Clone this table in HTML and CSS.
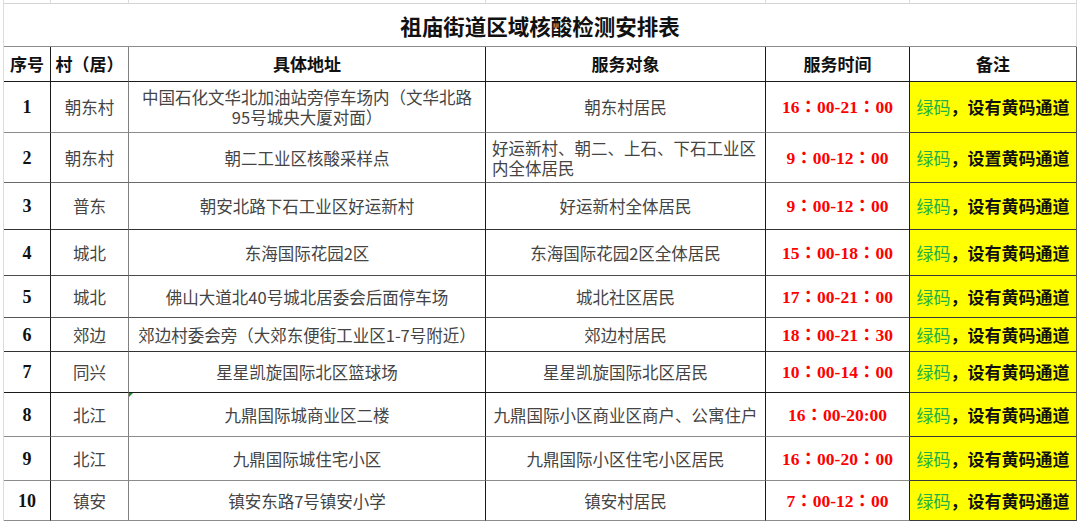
FILE: index.html
```html
<!DOCTYPE html>
<html lang="zh-CN">
<head>
<meta charset="utf-8">
<title>祖庙街道区域核酸检测安排表</title>
<link rel="stylesheet" href="styles.css">
</head>
<body>
<div class="sheet">
  <div class="row strip">
    <div class="c"></div><div class="c"></div><div class="c"></div><div class="c"></div><div class="c"></div><div class="c"></div>
  </div>
  <div class="row">
    <div class="c title">祖庙街道区域核酸检测安排表</div>
  </div>
  <div class="row head">
    <div class="c">序号</div><div class="c">村（居）</div><div class="c">具体地址</div><div class="c">服务对象</div><div class="c">服务时间</div><div class="c">备注</div>
  </div>
  <div class="row r1">
    <div class="c no">1</div><div class="c">朝东村</div><div class="c multi"><span class="ln">中国石化文华北加油站旁停车场内（文华北路</span><span class="ln">95号城央大厦对面）</span></div><div class="c">朝东村居民</div><div class="c time">16：00-21：00</div><div class="c note"><span class="g">绿码</span>，设有黄码通道</div>
  </div>
  <div class="row r2">
    <div class="c no">2</div><div class="c">朝东村</div><div class="c">朝二工业区核酸采样点</div><div class="c multi left"><span class="ln">好运新村、朝二、上石、下石工业区</span><span class="ln">内全体居民</span></div><div class="c time">9：00-12：00</div><div class="c note"><span class="g">绿码</span>，设置黄码通道</div>
  </div>
  <div class="row r3">
    <div class="c no">3</div><div class="c">普东</div><div class="c">朝安北路下石工业区好运新村</div><div class="c">好运新村全体居民</div><div class="c time">9：00-12：00</div><div class="c note"><span class="g">绿码</span>，设有黄码通道</div>
  </div>
  <div class="row r4">
    <div class="c no">4</div><div class="c">城北</div><div class="c">东海国际花园2区</div><div class="c">东海国际花园2区全体居民</div><div class="c time">15：00-18：00</div><div class="c note"><span class="g">绿码</span>，设有黄码通道</div>
  </div>
  <div class="row r5">
    <div class="c no">5</div><div class="c">城北</div><div class="c">佛山大道北40号城北居委会后面停车场</div><div class="c">城北社区居民</div><div class="c time">17：00-21：00</div><div class="c note"><span class="g">绿码</span>，设有黄码通道</div>
  </div>
  <div class="row r6">
    <div class="c no">6</div><div class="c">郊边</div><div class="c">郊边村委会旁（大郊东便街工业区1-7号附近）</div><div class="c">郊边村居民</div><div class="c time">18：00-21：30</div><div class="c note"><span class="g">绿码</span>，设有黄码通道</div>
  </div>
  <div class="row r7">
    <div class="c no">7</div><div class="c">同兴</div><div class="c">星星凯旋国际北区篮球场</div><div class="c">星星凯旋国际北区居民</div><div class="c time">10：00-14：00</div><div class="c note"><span class="g">绿码</span>，设有黄码通道</div>
  </div>
  <div class="row r8">
    <div class="c no">8</div><div class="c">北江</div><div class="c flag">九鼎国际城商业区二楼</div><div class="c">九鼎国际小区商业区商户、公寓住户</div><div class="c time">16：00-20:00</div><div class="c note"><span class="g">绿码</span>，设有黄码通道</div>
  </div>
  <div class="row r9">
    <div class="c no">9</div><div class="c">北江</div><div class="c">九鼎国际城住宅小区</div><div class="c">九鼎国际小区住宅小区居民</div><div class="c time">16：00-20：00</div><div class="c note"><span class="g">绿码</span>，设有黄码通道</div>
  </div>
  <div class="row r10">
    <div class="c no">10</div><div class="c">镇安</div><div class="c">镇安东路7号镇安小学</div><div class="c">镇安村居民</div><div class="c time">7：00-12：00</div><div class="c note"><span class="g">绿码</span>，设有黄码通道</div>
  </div>
</div>
</body>
</html>
```

FILE: styles.css
```css
html, body {
  margin: 0;
  padding: 0;
  background: #ffffff;
}

body {
  width: 1080px;
  height: 524px;
  overflow: hidden;
  font-family: "Noto Sans CJK SC", "Noto Sans", sans-serif;
}

.sheet {
  display: grid;
  grid-template-columns: 47px 78px 357px 280px 144px 167px;
  grid-template-rows: 4px 43px 35px 51px 50px 47px 46px 42px 34px 41px 44px 44px 40px;
  margin-left: 3px;
  width: 1073px;
  border-left: 1px solid #dcdcdc;
}

.row {
  display: contents;
}

.c {
  box-sizing: border-box;
  border-right: 1px solid #1a1a1a;
  border-bottom: 1px solid #8c8c8c;
  display: flex;
  align-items: center;
  justify-content: center;
  text-align: center;
  font-size: 16.5px;
  line-height: 20px;
  color: #444444;
  white-space: nowrap;
  position: relative;
}

.multi {
  flex-direction: column;
}

.ln {
  display: block;
  height: 20px;
  line-height: 20px;
}

/* column line colours */
.row > .c:nth-child(2) { border-right-color: #808080; }
.row > .c:nth-child(6) { border-right-color: #555555; }

/* top strip of spreadsheet grid */
.strip > .c,
.strip > .c:nth-child(2),
.strip > .c:nth-child(6) {
  border-right-color: #dcdcdc;
  border-bottom-color: #d4d4d4;
}

.title {
  grid-column: 1 / -1;
  border-right-color: #dcdcdc;
  border-bottom-color: #8c8c8c;
  font-size: 21.5px;
  font-weight: 700;
  color: #111111;
  padding-top: 1px;
}

.head > .c {
  font-size: 17px;
  font-weight: 700;
  color: #111111;
  border-bottom-color: #1a1a1a;
}

.r1 > .c { border-bottom-color: #8c8c8c; }
.r2 > .c { border-bottom-color: #6a6a6a; }
.r3 > .c { border-bottom-color: #333333; }
.r4 > .c { border-bottom-color: #4a4a4a; }
.r5 > .c { border-bottom-color: #555555; }
.r6 > .c { border-bottom-color: #333333; }
.r7 > .c { border-bottom-color: #1a1a1a; }
.r8 > .c { border-bottom-color: #8c8c8c; }
.r9 > .c { border-bottom-color: #8c8c8c; }
.r10 > .c { border-bottom-color: #8c8c8c; }

.no {
  font-family: "Liberation Serif", "Noto Sans CJK SC", serif;
  font-weight: 700;
  font-size: 18px;
  color: #111111;
}

.left {
  align-items: flex-start;
  text-align: left;
  padding-left: 6px;
}

.time {
  font-family: "Liberation Serif", "Noto Sans CJK TC", serif;
  font-weight: 700;
  font-size: 17.5px;
  color: #ff0000;
}

.note {
  background: #ffff00;
  font-size: 17px;
  font-weight: 700;
  color: #111111;
}

.row > .note { border-bottom-color: #3a3a3a; }

.g {
  color: #1db04a;
  font-weight: 400;
}

.flag::before {
  content: "";
  position: absolute;
  left: 0;
  top: 0;
  border-top: 4px solid #1f8f1f;
  border-right: 4px solid transparent;
}
```
